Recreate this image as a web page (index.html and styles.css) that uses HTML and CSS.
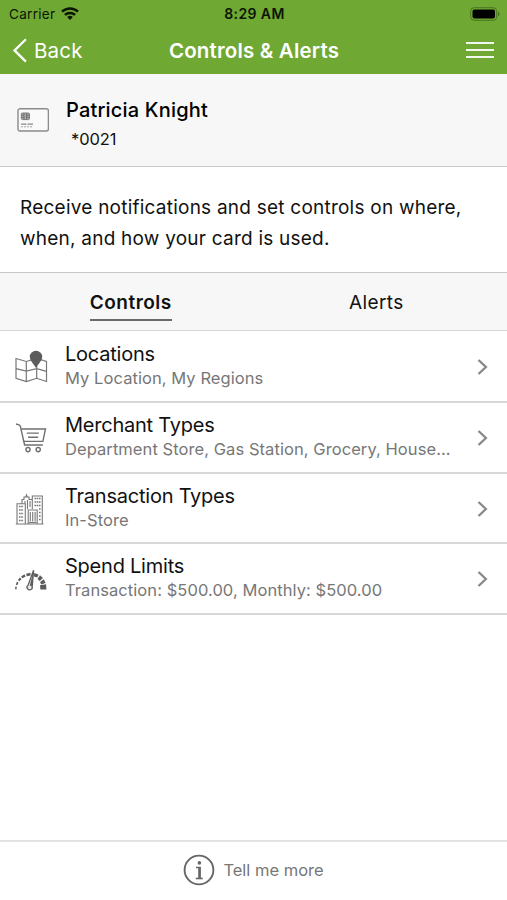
FILE: index.html
```html
<!DOCTYPE html>
<html lang="en">
<head>
    <meta charset="UTF-8">
    <meta name="viewport" content="width=device-width, initial-scale=1.0">
    <title>Controls &amp; Alerts</title>
    <link rel="stylesheet" href="styles.css">
</head>
<body>
    <header class="header">
        <div class="status-bar">
            <div class="carrier">
                <span>Carrier</span>
                <svg class="wifi" width="18" height="13" viewBox="0 0 18 13" fill="none" stroke="#0c1504" stroke-width="2.5">
                    <path d="M1 4.6a11.6 11.6 0 0 1 16 0"/>
                    <path d="M3.9 7.9a7.5 7.5 0 0 1 10.2 0"/>
                    <path d="M9 13l-2.8-2.9a4 4 0 0 1 5.6 0z" fill="#0c1504" stroke="none"/>
                </svg>
            </div>
            <span class="time">8:29 AM</span>
            <svg class="battery" width="30" height="14" viewBox="0 0 30 14">
                <rect x=".7" y=".7" width="26" height="12.6" rx="3.5" fill="none" stroke="#4a7420"/>
                <rect x="2.5" y="2.6" width="22.5" height="8.8" rx="1.8" fill="#000"/>
                <path d="M28 4.6c2 .8 2 4 0 4.8z" fill="#4a7420"/>
            </svg>
        </div>
        <nav class="nav-bar">
            <a class="back">
                <svg width="15" height="25" viewBox="0 0 15 25" fill="none" stroke="#fff" stroke-width="2.3">
                    <path d="M13.9 1.2L2.5 12.4l11.4 11.2"/>
                </svg>
                <span>Back</span>
            </a>
            <h1 class="title">Controls &amp; Alerts</h1>
            <div class="menu"><i></i><i></i><i></i></div>
        </nav>
    </header>

    <section class="account">
        <svg class="card-icon" width="32" height="24" viewBox="0 0 32 24" fill="none" stroke="#8b8b8b">
            <rect x="1" y=".8" width="30.4" height="22.2" rx="2" stroke-width="1.4" fill="#fafafa"/>
            <rect x="4.3" y="5" width="8.2" height="6.6" rx="1" fill="#aaa" stroke="#808080"/>
            <path d="M4.3 7.2h2.6M4.3 9.4h2.6M9.7 7.2h2.6M9.7 9.4h2.6M7 5v6.6M9.6 5v6.6" stroke="#666" stroke-width=".8"/>
            <path d="M4 16.2h5.5M10.5 16.2h5.5" stroke="#888" stroke-width="1.2"/>
            <path d="M4 18.8h12" stroke="#999" stroke-width=".9" stroke-dasharray="2 1"/>
        </svg>
        <div>
            <h2 class="name">Patricia Knight</h2>
            <p class="number">*0021</p>
        </div>
    </section>

    <p class="description">Receive notifications and set controls on where,<br>when, and how your card is used.</p>

    <div class="tabs">
        <div class="tab"><span class="tab-label active">Controls</span></div>
        <div class="tab"><span class="tab-label">Alerts</span></div>
    </div>

    <ul class="list">
        <li class="row">
            <svg class="icon" width="34" height="34" viewBox="0 0 34 34" fill="none" stroke="#777" stroke-width="1.2">
                <path d="M2 8.5l10.3 3 10.4-3 9.8 3v20l-9.8-3.2-10.4 3.2L2 28.3z"/>
                <path d="M12.3 11.5v20M22.7 15v13.3M2 18.7l10.3 2.5 10.4-2.5 9.8 2.7"/>
                <path d="M21.8 17.2c-.7-3.7-5.4-5.4-5.4-10.2a5.6 5.6 0 0 1 11.2 0c0 4.8-4.7 6.5-5.8 10.2z" fill="#5c5c5c" stroke="#5c5c5c"/>
            </svg>
            <div class="text">
                <h3>Locations</h3>
                <p>My Location, My Regions</p>
            </div>
            <svg class="chevron" width="12" height="18" viewBox="0 0 12 18"><path d="M1.5 2l7.4 7-7.4 7"/></svg>
        </li>
        <li class="row">
            <svg class="icon" width="34" height="34" viewBox="0 0 34 34" fill="none" stroke="#707070" stroke-width="1.4">
                <path d="M2 3l3 .8c.9.3 1.2.7 1.4 1.6l4.2 18.6h18.2"/>
                <path d="M7.2 8h24.3L28.9 20.4H9.8"/>
                <path d="M12.7 12.1h12.1M14 16.2h10.2"/>
                <circle cx="14" cy="28.6" r="2.1"/>
                <circle cx="24.2" cy="28.6" r="2.1"/>
            </svg>
            <div class="text">
                <h3>Merchant Types</h3>
                <p>Department Store, Gas Station, Grocery, House...</p>
            </div>
            <svg class="chevron" width="12" height="18" viewBox="0 0 12 18"><path d="M1.5 2l7.4 7-7.4 7"/></svg>
        </li>
        <li class="row">
            <svg class="icon" width="34" height="34" viewBox="0 0 34 34" fill="none" stroke="#777" stroke-width="1.1">
                <path d="M1.8 32h27.6M3 32V11.8h8.3V32M18.3 17V4h10v28M8 11.8V7.5h2V5h5v2.5h3.3M11.8 5l.7-2L13.2 5M13.5 17V8M14.2 32V18h9v14"/>
                <path d="M5 14.5h4.5M5 18h4.5M5 21.5h4.5M5 25h4.5M5 28.5h4.5M20.5 6.5h6M20.5 10h6M20.5 13.5h6M25 17h2M25 20.5h2M25 24h2M25 27.5h2" stroke-width="1.5" stroke-dasharray="1.6 .6"/>
                <path d="M16.3 20v9.5M18.7 20v9.5M21.1 20v9.5M15 30.5h7.5M11 9v2.5M16 9v6"/>
            </svg>
            <div class="text">
                <h3>Transaction Types</h3>
                <p>In-Store</p>
            </div>
            <svg class="chevron" width="12" height="18" viewBox="0 0 12 18"><path d="M1.5 2l7.4 7-7.4 7"/></svg>
        </li>
        <li class="row">
            <svg class="icon" width="34" height="34" viewBox="0 0 34 34" fill="#5c5c5c">
                <path d="M1.1 27.3l.3-2.8 1.4.2-.3 2.7zM1.8 22.8l1.1-3 1.6.7-1.2 2.8zM3.9 18.1l2-2.6 1.6 1.4-2 2.4zM7.1 14.5l3.4-2.2 1.1 2.1-3.2 1.9zM12 11.7l4.5-.9v2.8l-3.6.7zM20.3 11l4.3 1.5-1.3 3.1-3.4-1.1zM26 13.3l3 2.7-3.3 2.9-2.2-2zM29.8 17.3l1.8 3.7-4.5 1.6-1-2.5zM32.1 22.3l.3 5.2h-6l-.4-4.2z"/>
                <path d="M19.6 8.2l-1.4 16.6a2.6 2.6 0 1 1-4.1-1.6z" fill="#e8e8e8" stroke="#5c5c5c" stroke-width="1.3"/>
                <path d="M19.6 8.2l-3.8 15.3 2 1z"/>
            </svg>
            <div class="text">
                <h3>Spend Limits</h3>
                <p>Transaction: $500.00, Monthly: $500.00</p>
            </div>
            <svg class="chevron" width="12" height="18" viewBox="0 0 12 18"><path d="M1.5 2l7.4 7-7.4 7"/></svg>
        </li>
    </ul>

    <footer class="footer">
        <svg width="32" height="32" viewBox="0 0 32 32" fill="none" stroke="#666" stroke-width="1.9">
            <circle cx="16" cy="16" r="14.4"/>
            <circle cx="16.4" cy="8.9" r="1.8" fill="#666" stroke="none"/>
            <path d="M13 13.4h3.8v10.8" stroke-width="1.5"/>
            <path d="M16.5 13v11" stroke-width="2.6"/>
            <path d="M12.8 24.5h7" stroke-width="1.6"/>
        </svg>
        <span>Tell me more</span>
    </footer>
</body>
</html>
```
FILE: styles.css
```css
* {
    box-sizing: border-box;
    margin: 0;
    padding: 0;
}
body {
    display: flex;
    flex-direction: column;
    height: 900px;
    font-family: Inter, "Liberation Sans", sans-serif;
    background: #fff;
    color: #111;
    overflow: hidden;
}
.header {
    height: 74px;
    background: #6fa833;
}
.status-bar {
    display: grid;
    grid-template-columns: 1fr auto 1fr;
    align-items: center;
    height: 27px;
    padding: 0 7px 0 9px;
    font-size: 13.5px;
    color: #0c1504;
}
.carrier {
    display: flex;
    align-items: center;
    gap: 6px;
    letter-spacing: 0.3px;
}
.time {
    font-size: 14px;
    font-weight: 600;
    letter-spacing: 0.4px;
}
.battery {
    justify-self: end;
}
.nav-bar {
    display: grid;
    grid-template-columns: 1fr auto 1fr;
    align-items: center;
    height: 46px;
    padding: 0 12px 0 13px;
    color: #fff;
}
.back {
    display: flex;
    align-items: center;
    gap: 7px;
    margin-left: -1px;
    font-size: 20.5px;
    letter-spacing: 0.2px;
}
.title {
    font-size: 20.5px;
    font-weight: 600;
    letter-spacing: 0.17px;
}
.menu {
    display: flex;
    flex-direction: column;
    gap: 4px;
    justify-self: end;
    width: 28px;
    margin-right: 1px;
}
.menu i {
    height: 2px;
    background: #f3f8ec;
}
.menu i + i {
    margin-top: 1px;
}
.account {
    display: flex;
    gap: 17px;
    height: 93px;
    padding: 23px 17px 0;
    background: #f7f7f7;
    border-bottom: 1px solid #c8c8c8;
}
.card-icon {
    margin-top: 11px;
}
.name {
    font-size: 20px;
    font-weight: 500;
    line-height: 26px;
    letter-spacing: 0.18px;
    color: #000;
}
.number {
    padding: 5px 0 0 5px;
    font-size: 16.5px;
    line-height: 22px;
    letter-spacing: -0.1px;
}
.description {
    height: 106px;
    padding: 25px 20px 0;
    font-size: 19px;
    line-height: 31px;
    letter-spacing: 0.23px;
    white-space: nowrap;
    border-bottom: 1px solid #c8c8c8;
}
.tabs {
    display: flex;
    height: 58px;
    padding: 0 8px;
    background: #f7f7f7;
    border-bottom: 1px solid #d5d5d5;
}
.tab {
    flex: 1;
    text-align: center;
}
.tab-label {
    display: inline-block;
    height: 48px;
    font-size: 19px;
    line-height: 59px;
    letter-spacing: 0.4px;
}
.active {
    font-weight: 600;
    letter-spacing: 0.5px;
    border-bottom: 2px solid #6a6a6a;
}
.list {
    padding-top: 1px;
    list-style: none;
}
.row {
    display: flex;
    height: 70.8px;
    padding: 0 18px 0 14px;
    border-bottom: 2px solid #d8d8d8;
}
.icon {
    flex: none;
    margin-top: 18px;
}
.text {
    flex: 1;
    padding: 10px 0 0 17px;
    white-space: nowrap;
}
.text h3 {
    font-size: 20px;
    font-weight: 400;
    line-height: 25px;
    letter-spacing: -0.23px;
}
.text p {
    font-size: 16.5px;
    line-height: 23px;
    letter-spacing: 0.07px;
    color: #777;
}
.chevron {
    flex: none;
    margin-top: 26px;
    fill: none;
    stroke: #888;
    stroke-width: 2.3;
}
.footer {
    display: flex;
    justify-content: center;
    align-items: center;
    gap: 8px;
    height: 60px;
    padding-bottom: 2px;
    margin-top: auto;
    border-top: 2px solid #e2e2e2;
    font-size: 16.5px;
    color: #777;
}
```
